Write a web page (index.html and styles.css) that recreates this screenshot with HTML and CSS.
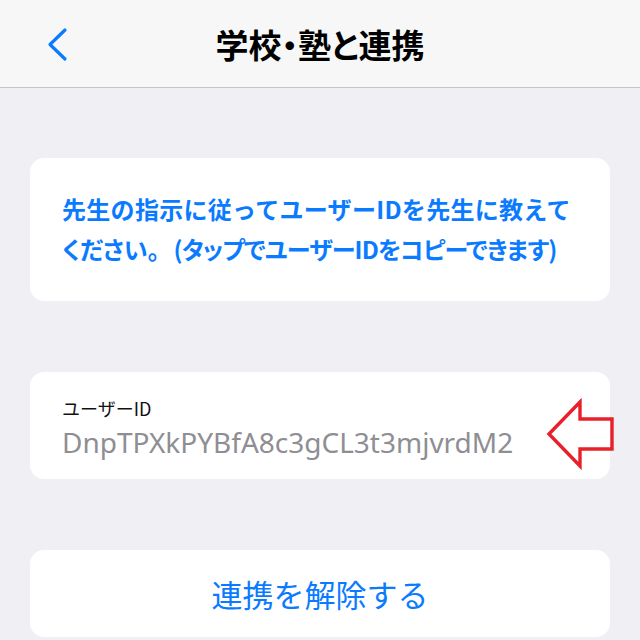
FILE: index.html
```html
<!DOCTYPE html>
<html lang="ja">
<head>
<meta charset="utf-8">
<title>学校・塾と連携</title>
<link rel="stylesheet" href="styles.css">
</head>
<body>
<header class="navbar">
  <button class="back" aria-label="戻る">
    <svg width="24" height="36" viewBox="0 0 24 36"><polyline points="19,4 4,18.5 19,33" fill="none" stroke="#0a7bff" stroke-width="3.2" stroke-linecap="round" stroke-linejoin="round"/></svg>
  </button>
  <h1 class="title">学校・塾と連携</h1>
</header>
<main class="content">
  <section class="card info">
    <p class="info-text"><span class="line1">先生の指示に従ってユーザーIDを先生に教えて</span><br><span class="line2">ください。<span class="paren">(タップでユーザーIDをコピーできます)</span></span></p>
  </section>
  <section class="card userid">
    <div class="label">ユーザーID</div>
    <div class="value">DnpTPXkPYBfA8c3gCL3t3mjvrdM2</div>
    <svg class="pointer" width="72" height="72" viewBox="0 0 72 72"><polygon points="3,34 34,2 34,19 66,19 66,49 34,49 34,66" fill="none" stroke="#e8202a" stroke-width="3.4" stroke-linejoin="miter"/></svg>
  </section>
  <button class="card unlink">連携を解除する</button>
</main>
</body>
</html>
```
FILE: styles.css
```css
html, body {
  margin: 0;
  padding: 0;
}
body {
  background: #efeff4;
  font-family: "Noto Sans CJK JP", "Noto Sans", sans-serif;
  width: 640px;
  height: 640px;
  overflow: hidden;
}
.navbar {
  height: 87px;
  background: #f7f7f7;
  border-bottom: 1px solid #c6c6c8;
  display: flex;
  align-items: center;
  justify-content: center;
  position: relative;
}
.back {
  position: absolute;
  left: 46px;
  top: 26px;
  background: none;
  border: 0;
  padding: 0;
  width: 24px;
  height: 36px;
}
.back svg { display: block; }
.title {
  margin: 0;
  font-size: 33px;
  font-weight: 700;
  color: #000;
  font-feature-settings: "palt";
  line-height: 40px;
}
.content {
  padding: 70px 30px 0;
  display: flex;
  flex-direction: column;
  gap: 71px;
}
.card {
  background: #fff;
  border-radius: 14px;
  border: 0;
  box-sizing: border-box;
  width: 580px;
}
.info {
  padding: 31px 32px;
  height: 143px;
}
.info-text {
  margin: 0;
  color: #0a7bff;
  font-size: 24px;
  font-weight: 700;
  line-height: 40px;
  white-space: nowrap;
}
.line1 {
  letter-spacing: 0.3px;
}
.line2 {
  font-feature-settings: "palt";
}
.paren {
  margin-left: 14px;
  letter-spacing: -0.8px;
}
.userid {
  position: relative;
  height: 107px;
  padding: 24px 32px 0;
}
.label {
  font-size: 18px;
  line-height: 24px;
  color: #111;
}
.value {
  margin-top: 4px;
  font-family: "Noto Sans", "Open Sans", sans-serif;
  font-size: 28px;
  line-height: 36px;
  color: #8e8e93;
}
.pointer {
  position: absolute;
  left: 516px;
  top: 28px;
  overflow: visible;
}
.unlink {
  height: 87px;
  font-family: "Noto Sans CJK JP", sans-serif;
  font-size: 31px;
  font-weight: 400;
  color: #0a7bff;
  display: flex;
  align-items: center;
  justify-content: center;
  padding: 0;
}
```
